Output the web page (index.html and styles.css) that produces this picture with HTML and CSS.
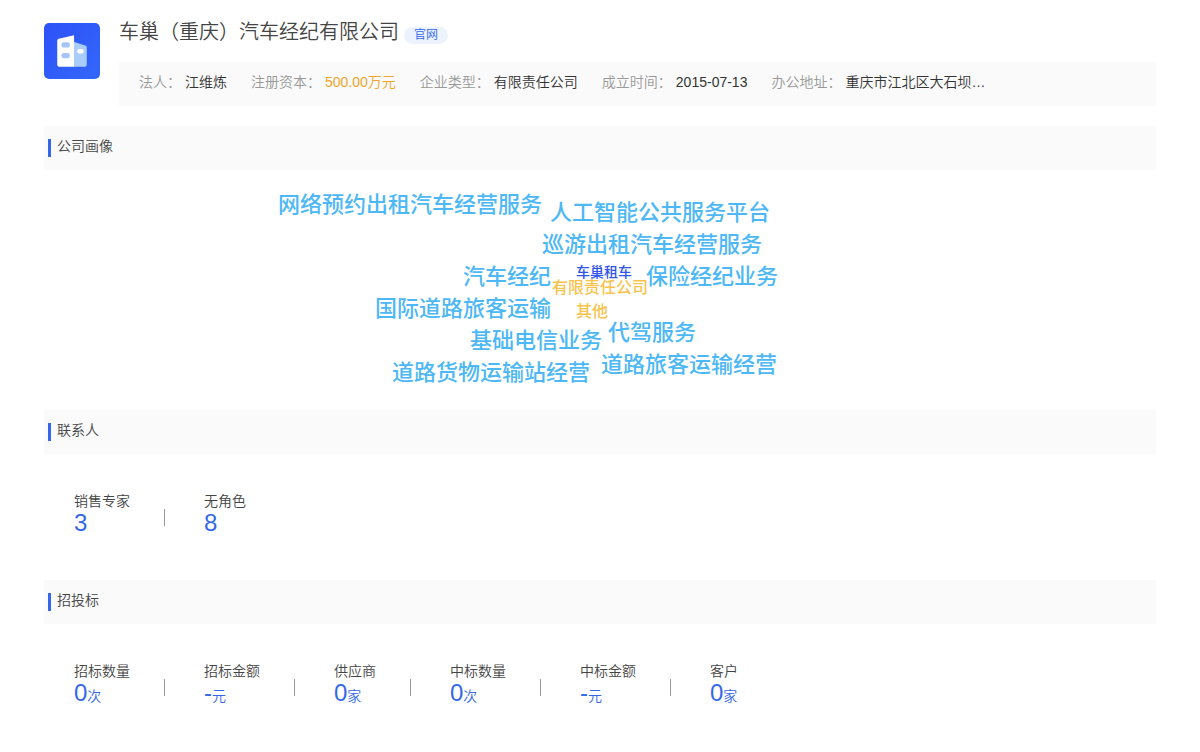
FILE: index.html
```html
<!DOCTYPE html>
<html lang="zh-CN">
<head>
<meta charset="utf-8">
<meta name="viewport" content="width=device-width, initial-scale=1">
<title>车巢（重庆）汽车经纪有限公司</title>
<link rel="stylesheet" href="styles.css">
</head>
<body>
<main class="page">
  <header class="company">
    <svg class="logo" viewBox="0 0 55 55" aria-hidden="true">
      <defs>
        <linearGradient id="logo-bg" x1="0" y1="0" x2="1" y2="1">
          <stop offset="0" stop-color="#2e51f8"/>
          <stop offset="1" stop-color="#3268fb"/>
        </linearGradient>
      </defs>
      <rect width="55" height="55" rx="5" fill="url(#logo-bg)"/>
      <path d="M29 18.5L40.5 22Q42 22.500 42 24V40.500Q42 43 39.500 43H29Z" fill="#a9cdfb"/>
      <path d="M29.500 12V43H15.500Q13 43 13 40.500V17.500Q13 16 14.500 15.500Z" fill="#fff"/>
      <rect x="17" y="19" width="8.500" height="5" rx="2.500" fill="#a6c6fb"/>
      <rect x="17" y="29.500" width="8.500" height="5" rx="2.500" fill="#a6c6fb"/>
      <rect x="32.500" y="25.500" width="6.500" height="4.500" rx="2.200" fill="#fff"/>
    </svg>
    <div class="company-body">
      <div class="title-row">
        <h1 class="title">车巢（重庆）汽车经纪有限公司</h1>
        <a class="site-link" href="#">官网</a>
      </div>
      <dl class="info">
        <div class="info-item"><dt>法人：</dt><dd>江维炼</dd></div>
        <div class="info-item"><dt>注册资本：</dt><dd class="capital">500.00万元</dd></div>
        <div class="info-item"><dt>企业类型：</dt><dd>有限责任公司</dd></div>
        <div class="info-item"><dt>成立时间：</dt><dd>2015-07-13</dd></div>
        <div class="info-item"><dt>办公地址：</dt><dd>重庆市江北区大石坝…</dd></div>
      </dl>
    </div>
  </header>

  <section>
    <h2 class="section-title">公司画像</h2>
    <div class="cloud">
      <span class="word w1">网络预约出租汽车经营服务</span>
      <span class="word w2">人工智能公共服务平台</span>
      <span class="word w3">巡游出租汽车经营服务</span>
      <span class="word w4">汽车经纪</span>
      <span class="word name w5">车巢租车</span>
      <span class="word w6">保险经纪业务</span>
      <span class="word kind w7">有限责任公司</span>
      <span class="word w8">国际道路旅客运输</span>
      <span class="word kind w9">其他</span>
      <span class="word w10">基础电信业务</span>
      <span class="word w11">代驾服务</span>
      <span class="word w12">道路货物运输站经营</span>
      <span class="word w13">道路旅客运输经营</span>
    </div>
  </section>

  <section>
    <h2 class="section-title">联系人</h2>
    <dl class="stats">
      <div class="stat"><dt>销售专家</dt><dd>3</dd></div>
      <div class="stat"><dt>无角色</dt><dd>8</dd></div>
    </dl>
  </section>

  <section>
    <h2 class="section-title">招投标</h2>
    <dl class="stats">
      <div class="stat"><dt>招标数量</dt><dd>0<small>次</small></dd></div>
      <div class="stat"><dt>招标金额</dt><dd>-<small>元</small></dd></div>
      <div class="stat"><dt>供应商</dt><dd>0<small>家</small></dd></div>
      <div class="stat"><dt>中标数量</dt><dd>0<small>次</small></dd></div>
      <div class="stat"><dt>中标金额</dt><dd>-<small>元</small></dd></div>
      <div class="stat"><dt>客户</dt><dd>0<small>家</small></dd></div>
    </dl>
  </section>
</main>
</body>
</html>
```
FILE: styles.css
```css
* {
  box-sizing: border-box;
}

body,
h1,
h2,
dl,
dd {
  margin: 0;
}

body {
  background: #fff;
  color: #444;
  font: 350 14px/20px "Liberation Sans", "Noto Sans CJK SC", sans-serif;
}

.page {
  padding: 17px 44px;
}

.company {
  display: flex;
  gap: 19px;
  margin-bottom: 20px;
}

.logo {
  flex: none;
  width: 56px;
  height: 56px;
  margin-top: 6px;
}

.company-body {
  flex: 1;
  min-width: 0;
}

.title-row {
  display: flex;
  align-items: flex-start;
  gap: 5px;
  margin-bottom: 15px;
}

.title {
  font-size: 20px;
  font-weight: 350;
  line-height: 30px;
}

.site-link {
  margin-top: 10px;
  padding: 0 10px;
  border-radius: 9px;
  background: #ecf3fe;
  color: #2f66ee;
  font-size: 12px;
  line-height: 17px;
  text-decoration: none;
}

.info {
  display: flex;
  flex-wrap: wrap;
  gap: 4px 24px;
  padding: 10px 20px 14px;
  background: #fafafa;
}

.info-item {
  display: flex;
  gap: 4px;
}

.info dt {
  color: #999;
}

.info dd {
  color: #333;
}

.info .capital {
  color: #f0a52a;
}

.section-title {
  display: flex;
  align-items: center;
  gap: 6px;
  height: 44px;
  padding: 0 4px 4px;
  background: #fafafa;
  font-size: 14px;
  font-weight: 350;
}

.section-title::before {
  content: "";
  width: 3px;
  height: 18px;
  margin-top: 4px;
  background: #3568e8;
}

.cloud {
  position: relative;
  height: 240px;
}

.word {
  position: absolute;
  color: #4db8f5;
  font-size: 22px;
  font-weight: 500;
  line-height: 32px;
  white-space: nowrap;
}

.name {
  color: #2f54eb;
  font-size: 14px;
  line-height: 20px;
}

.kind {
  color: #f8c34c;
  font-size: 16px;
  line-height: 24px;
}

.w1 { left: 234px; top: 19px; }
.w2 { left: 506px; top: 27px; }
.w3 { left: 498px; top: 59px; }
.w4 { left: 419px; top: 91px; }
.w5 { left: 532px; top: 92px; }
.w6 { left: 602px; top: 91px; }
.w7 { left: 508px; top: 106px; }
.w8 { left: 331px; top: 123px; }
.w9 { left: 532px; top: 130px; }
.w10 { left: 426px; top: 155px; }
.w11 { left: 564px; top: 147px; }
.w12 { left: 348px; top: 187px; }
.w13 { left: 557px; top: 179px; }

.stats {
  display: flex;
  flex-wrap: wrap;
  padding: 37px 30px 45px;
}

.stat {
  display: flex;
  flex-direction: column;
  position: relative;
}

.stat:not(:last-child) {
  padding-right: 74px;
}

.stat:not(:last-child)::after {
  content: "";
  position: absolute;
  top: 18px;
  right: 39px;
  width: 1px;
  height: 17px;
  background: #999;
}

.stat dd {
  color: #3568e8;
  font-size: 24px;
  line-height: 24px;
}

.stat small {
  font-size: 14px;
}
```
